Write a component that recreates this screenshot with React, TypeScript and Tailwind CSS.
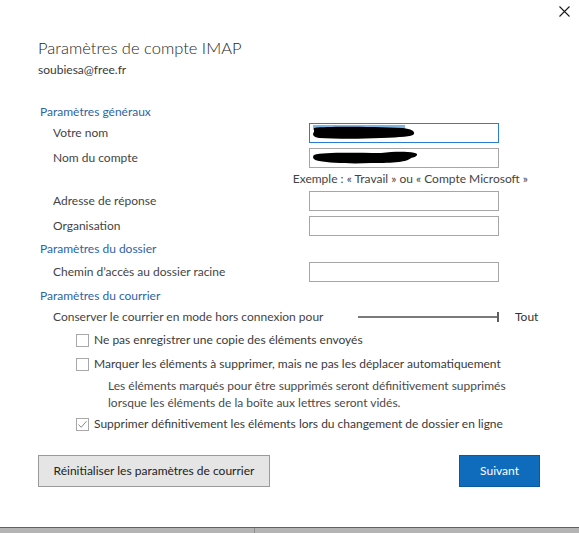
function Blob({ variant }: { variant: 1 | 2 }) {
  if (variant === 1) {
    return (
      <svg width="110" height="16" viewBox="0 0 110 16" className="absolute left-[1px] top-[1px]">
        <rect x="2" y="0" width="92" height="5" fill="#7fb6e6" />
        <path d="M3 3 C20 1 60 2 92 3 C100 4 104 6 103 9 C101 12 90 12 70 13 C50 14 25 14 8 13 C2 12 1 9 3 7 Z" fill="#000" />
      </svg>
    );
  }
  return (
    <svg width="110" height="16" viewBox="0 0 110 16" className="absolute left-[1px] top-[1px]">
      <path d="M3 5 C12 2 40 3 70 3 C82 2 92 1 104 3 C108 4 106 7 100 8 C96 12 84 13 60 13 C40 14 20 13 8 11 C2 10 1 7 3 5 Z" fill="#000" />
    </svg>
  );
}

function Field({ label, focused, blob }: { label: string; focused?: boolean; blob?: 1 | 2 }) {
  return (
    <div className="flex h-[20px] items-center">
      <div className="w-[271px] pl-[15px] text-[#444]">{label}</div>
      <div
        className={`relative h-[20px] w-[190px] border ${focused ? 'border-[#2b7cd3]' : 'border-[#a6a6a6]'} bg-white`}
      >
        {blob && <Blob variant={blob} />}
      </div>
    </div>
  );
}

function Section({ title, className }: { title: string; className?: string }) {
  return <div className={`h-[16px] pl-[2px] leading-[16px] text-[#2c64a6] ${className ?? ''}`}>{title}</div>;
}

function Check({ label, checked, className }: { label: string; checked?: boolean; className?: string }) {
  return (
    <div className={`flex h-[20px] items-center pl-[38px] text-[#3a3a3a] ${className ?? ''}`}>
      <div className="flex h-[13px] w-[13px] items-center justify-center border border-[#a8a8a8] bg-white">
        {checked && (
          <svg width="11" height="11" viewBox="0 0 11 11">
            <path d="M1.5 5.5 L4.2 8.3 L9.5 2.2" fill="none" stroke="#8a8a8a" strokeWidth="1" />
          </svg>
        )}
      </div>
      <span className="ml-[5px]">{label}</span>
    </div>
  );
}

export default function App() {
  return (
    <div
      className="relative flex h-[533px] w-[579px] flex-col bg-white text-[12px] leading-[16px] text-[#3a3a3a]"
      style={{ fontFamily: 'Lato, "Open Sans", sans-serif' }}
    >
      {/* close */}
      <svg width="11" height="11" viewBox="0 0 11 11" className="absolute left-[559px] top-[6px]">
        <path d="M0.5 0.5 L10.5 10.5 M10.5 0.5 L0.5 10.5" stroke="#1a1a1a" strokeWidth="1.1" />
      </svg>

      <div className="pl-[38px] pt-[38px]">
        <div className="h-[20px] text-[16.5px] font-light leading-[20px] text-[#262626]">Paramètres de compte IMAP</div>
        <div className="mt-[4px] h-[16px] text-[#3a3a3a]">soubiesa@free.fr</div>

        <Section title="Paramètres généraux" className="mt-[26px]" />
        <div className="mt-[3px]">
          <Field label="Votre nom" focused blob={1} />
        </div>
        <div className="mt-[5px]">
          <Field label="Nom du compte" blob={2} />
        </div>
        <div className="mt-[3px] h-[16px] w-[490px] text-right text-[#444]">
          Exemple : « Travail » ou « Compte Microsoft »
        </div>
        <div className="mt-[4px]">
          <Field label="Adresse de réponse" />
        </div>
        <div className="mt-[5px]">
          <Field label="Organisation" />
        </div>

        <Section title="Paramètres du dossier" className="mt-[5px]" />
        <div className="mt-[5px]">
          <Field label="Chemin d’accès au dossier racine" />
        </div>

        <Section title="Paramètres du courrier" className="mt-[6px]" />
        <div className="mt-[3px] flex h-[20px] items-center">
          <div className="w-[320px] pl-[15px] text-[#444]">Conserver le courrier en mode hors connexion pour</div>
          <div className="relative flex h-[10px] w-[141px] items-center">
            <div className="h-[2px] w-full bg-[#7a7a7a]" />
            <div className="absolute right-0 top-0 h-[10px] w-[2px] bg-[#5f5f5f]" />
          </div>
          <span className="ml-[16px] text-[#333]">Tout</span>
        </div>

        <Check label="Ne pas enregistrer une copie des éléments envoyés" className="mt-[3px]" />
        <Check label="Marquer les éléments à supprimer, mais ne pas les déplacer automatiquement" className="mt-[4px]" />
        <div className="mt-[3px] pl-[70px] leading-[17px] text-[#4a4a4a]">
          Les éléments marqués pour être supprimés seront définitivement supprimés
          <br />
          lorsque les éléments de la boîte aux lettres seront vidés.
        </div>
        <Check label="Supprimer définitivement les éléments lors du changement de dossier en ligne" checked className="mt-[3px]" />

        <div className="mt-[21px] flex h-[32px]">
          <button className="h-[32px] w-[232px] border border-[#9a9a9a] bg-[#e5e5e5] text-[#222]">
            Réinitialiser les paramètres de courrier
          </button>
          <button className="ml-[189px] h-[32px] w-[81px] border border-[#0c5a9e] bg-[#0f6cbd] text-white">
            Suivant
          </button>
        </div>
      </div>

      <div className="mt-auto h-[1px] bg-[#2b6cb5]" />
      <div className="flex h-[5px] bg-[#b4b4b4]">
        <div className="w-[255px] border-r border-[#8e8e8e]" />
      </div>
    </div>
  );
}
